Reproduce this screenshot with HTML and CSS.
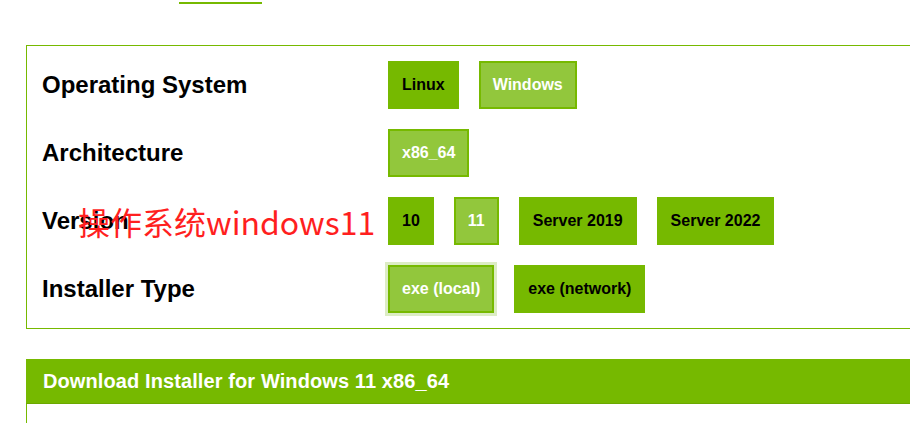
FILE: index.html
```html
<!DOCTYPE html>
<html lang="en">
<head>
<meta charset="utf-8">
<title>CUDA Toolkit Downloads</title>
<link rel="stylesheet" href="styles.css">
</head>
<body>
<div class="page">
  <div class="tabs"><span class="tab-indicator"></span></div>

  <section class="selector">
    <div class="row">
      <div class="label">Operating System</div>
      <div class="options">
        <button class="opt">Linux</button>
        <button class="opt selected">Windows</button>
      </div>
    </div>
    <div class="row">
      <div class="label">Architecture</div>
      <div class="options">
        <button class="opt selected">x86_64</button>
      </div>
    </div>
    <div class="row">
      <div class="label">Version<span class="annotation">操作系统windows11</span></div>
      <div class="options">
        <button class="opt">10</button>
        <button class="opt selected">11</button>
        <button class="opt">Server 2019</button>
        <button class="opt">Server 2022</button>
      </div>
    </div>
    <div class="row">
      <div class="label">Installer Type</div>
      <div class="options">
        <button class="opt selected focused">exe (local)</button>
        <button class="opt">exe (network)</button>
      </div>
    </div>
  </section>

  <section class="download">
    <div class="download-head">Download Installer for Windows 11 x86_64</div>
    <div class="download-body"></div>
  </section>
</div>
</body>
</html>
```

FILE: styles.css
```css
html, body {
  margin: 0;
  padding: 0;
  background: #ffffff;
  overflow: hidden;
}

.page {
  width: 1100px;
  padding-left: 26px;
  font-family: "Liberation Sans", Arial, sans-serif;
  color: #000;
}

.tabs {
  height: 45px;
  display: flex;
  align-items: flex-start;
}

.tab-indicator {
  display: block;
  margin-top: 2px;
  margin-left: 153px;
  width: 83px;
  height: 2px;
  background: #76b900;
}

.selector {
  width: 1000px;
  border: 1px solid #76b900;
  padding: 15px 0 15px 15px;
  box-sizing: border-box;
  display: flex;
  flex-direction: column;
  gap: 20px;
}

.row {
  display: flex;
  align-items: center;
  height: 48px;
}

.label {
  position: relative;
  width: 346px;
  flex: none;
  font-size: 24px;
  font-weight: bold;
  line-height: 28px;
}

.annotation {
  position: absolute;
  left: 36px;
  top: -6px;
  font-family: "Noto Sans CJK SC", "Liberation Sans", sans-serif;
  font-size: 32px;
  font-weight: normal;
  line-height: 40px;
  color: #ff1f1f;
  white-space: nowrap;
}

.options {
  display: flex;
  gap: 20px;
}

.opt {
  height: 48px;
  padding: 0 12px;
  border: 2px solid #76b900;
  background: #76b900;
  color: #000;
  font-family: "Liberation Sans", Arial, sans-serif;
  font-size: 16px;
  font-weight: bold;
  line-height: 20px;
  margin: 0;
  cursor: pointer;
}

.opt.selected {
  background: #92c73c;
  color: #ffffff;
}

.opt.focused {
  box-shadow: 0 0 0 3px #dcecc4;
}

.download {
  width: 1000px;
  margin-top: 30px;
  border-left: 1px solid #76b900;
}

.download-head {
  height: 44px;
  margin-left: -1px;
  background: #76b900;
  border-bottom: 1px solid #6ba800;
  color: #ffffff;
  font-size: 20px;
  font-weight: bold;
  letter-spacing: 0.1px;
  line-height: 44px;
  padding-left: 17px;
}

.download-body {
  height: 60px;
}
```
